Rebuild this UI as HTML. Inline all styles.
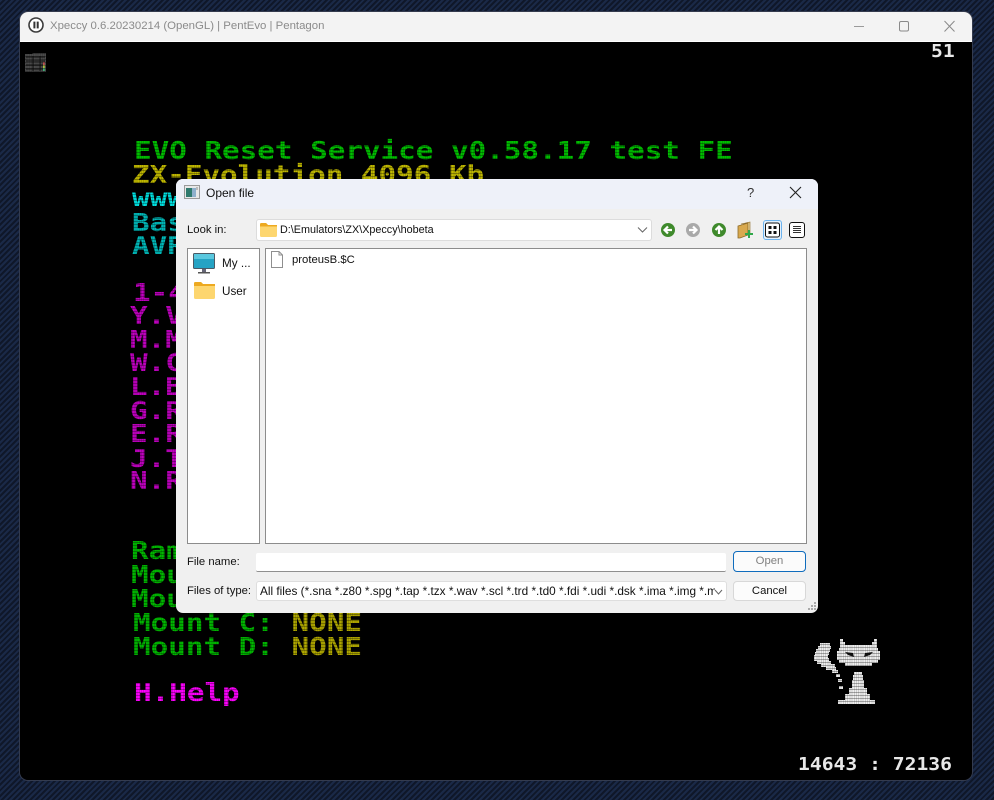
<!DOCTYPE html>
<html><head><meta charset="utf-8"><style>
html,body{margin:0;padding:0;width:994px;height:800px;overflow:hidden}
body{position:relative;background:#141f37 repeating-linear-gradient(135deg,#1a2947 0 2px,#0f1729 2px 4px);font-family:"Liberation Sans",sans-serif}
.a{position:absolute;white-space:nowrap}
#win{position:absolute;left:20px;top:12px;width:952px;height:768px;background:#000;border-radius:8px;overflow:hidden;box-shadow:0 0 0 1px #343b4e}
#tb{position:absolute;left:0;top:0;width:952px;height:29px;background:#f3f3f3;border-bottom:1px solid #fff}
.z{position:absolute;font:bold 25px/30px "DejaVu Sans Mono",monospace;white-space:pre;transform:scaleX(1.17);transform-origin:0 0}
.s{position:absolute;font:bold 18px/20px "DejaVu Sans Mono",monospace;color:#e8e8e8;white-space:pre;transform:scaleX(1.093);transform-origin:0 0}
#scan{position:absolute;left:0;top:30px;width:952px;height:738px;background:repeating-linear-gradient(0deg,rgba(0,0,0,.3) 0 1px,transparent 1px 3px),repeating-linear-gradient(90deg,rgba(0,0,0,.14) 0 1px,transparent 1px 2.2px)}
#dlg{position:absolute;left:176px;top:179px;width:642px;height:434px;background:#f0f0f0;border-radius:7px;overflow:hidden;color:#111;font-size:11.3px}
.l{position:absolute;white-space:nowrap;line-height:14px}
.box{position:absolute;background:#fff;box-sizing:border-box}
</style></head><body>
<div id="win">
<div id="tb">
<svg class="a" style="left:7px;top:4px" width="18" height="18" viewBox="0 0 18 18"><circle cx="9" cy="9" r="7" fill="#fff" stroke="#3b3b3b" stroke-width="1.6"/><rect x="6.4" y="5.6" width="2" height="6.8" fill="#333"/><rect x="9.7" y="5.6" width="2" height="6.8" fill="#333"/></svg>
<div class="a" style="left:30px;top:7px;font-size:11.4px;line-height:15px;color:#8b8b8b">Xpeccy 0.6.20230214 (OpenGL) | PentEvo | Pentagon</div>
<svg class="a" style="left:834px;top:4px" width="118" height="22" viewBox="0 0 118 22"><path d="M0 10.5H10" stroke="#9a9a9a" stroke-width="1" fill="none"/><rect x="45.5" y="5.5" width="9" height="9.5" rx="1.5" stroke="#8a8a8a" fill="none"/><path d="M90.5 5L100.5 15.5M100.5 5L90.5 15.500" stroke="#8a8a8a" fill="none"/></svg>
</div>
<svg class="a" style="left:5px;top:40px" width="22" height="20" viewBox="0 0 22 20"><path d="M0 2h7l1-1h13v19H0z" fill="#4a4a4a"/><path d="M1 5H20M1 9H20M1 13H20M1 17H20M8 4V19M15 4V19" stroke="#111" stroke-width="1"/><rect x="18" y="10" width="2" height="3" fill="#b55"/><rect x="18" y="13" width="2" height="3" fill="#ab4"/><rect x="18" y="16" width="2" height="3" fill="#4a7"/></svg>

<div class="z" style="left:114px;top:124px;color:#00c000">EVO Reset Service v0.58.17 test FE</div>
<div class="z" style="left:112px;top:148px;color:#c0b800">ZX-Evolution 4096 Kb</div>
<div class="z" style="left:112px;top:171px;color:#00e4e4">www.nedopc.com</div>
<div class="z" style="left:112px;top:196px;color:#00b8b8">Base conf</div>
<div class="z" style="left:112px;top:219px;color:#00b8b8">AVR ver</div>
<div class="z" style="left:113px;top:266px;color:#c000c0">1-4 list</div>
<div class="z" style="left:110px;top:289px;color:#c000c0">Y.V</div>
<div class="z" style="left:110px;top:313px;color:#c000c0">M.M</div>
<div class="z" style="left:110px;top:336px;color:#c000c0">W.C</div>
<div class="z" style="left:110px;top:360px;color:#c000c0">L.B</div>
<div class="z" style="left:110px;top:384px;color:#c000c0">G.R</div>
<div class="z" style="left:110px;top:407px;color:#c000c0">E.R</div>
<div class="z" style="left:110px;top:432px;color:#c000c0">J.T</div>
<div class="z" style="left:110px;top:454px;color:#c000c0">N.R</div>
<div class="z" style="left:111px;top:524px;color:#00b800">RamDisk</div>
<div class="z" style="left:111px;top:548px;color:#00b800">Mount A:</div>
<div class="z" style="left:111px;top:572px;color:#00b800">Mount B:</div>
<div class="z" style="left:113px;top:596px;color:#00b800">Mount C: <span style="color:#b0a800">NONE</span></div>
<div class="z" style="left:113px;top:620px;color:#00b800">Mount D: <span style="color:#b0a800">NONE</span></div>
<div class="z" style="left:114px;top:666px;color:#ff00ff">H.Help</div>

<svg class="a" style="left:770px;top:618px" width="110" height="85" viewBox="0 0 110 85" fill="#eeeeee" shape-rendering="crispEdges">
<rect x="30" y="13" width="10" height="3"/><rect x="28" y="16" width="13" height="3"/><rect x="26" y="19" width="14" height="3"/><rect x="25" y="22" width="14" height="3"/><rect x="24" y="25" width="14" height="3"/><rect x="24" y="28" width="15" height="3"/><rect x="27" y="31" width="14" height="3"/><rect x="31" y="34" width="14" height="3"/><rect x="36" y="37" width="10" height="3"/><rect x="42" y="40" width="6" height="3"/><rect x="46" y="44" width="4" height="3"/><rect x="48" y="49" width="4" height="3"/><rect x="49" y="56" width="4" height="3"/>
<rect x="50" y="9" width="3" height="3"/><rect x="50" y="12" width="5" height="3"/><rect x="84" y="9" width="3" height="3"/><rect x="82" y="12" width="5" height="3"/>
<rect x="50" y="15" width="7" height="3"/><rect x="80" y="15" width="7" height="3"/><rect x="50" y="15" width="37" height="3"/><rect x="49" y="18" width="39" height="3"/><rect x="47" y="21" width="43" height="9"/><rect x="49" y="30" width="39" height="3"/><rect x="55" y="33" width="27" height="3"/>
<rect x="64" y="42" width="8" height="3"/><rect x="63" y="45" width="10" height="5"/><rect x="62" y="50" width="12" height="8"/><rect x="59" y="58" width="18" height="6"/><rect x="55" y="64" width="25" height="6"/><rect x="48" y="70" width="37" height="4"/>
<path d="M55 22L63 23L64 27L58 25ZM83 22L75 23L74 27L80 25Z" fill="#111" shape-rendering="auto"/></svg>

<div id="scan"></div>
<div class="s" style="left:911px;top:30px">51</div>
<div class="s" style="left:778px;top:743px">14643 : 72136</div>
</div>

<div id="dlg">
<div class="a" style="left:0;top:0;width:642px;height:30px;background:#eef1f9"></div>
<svg class="a" style="left:8px;top:6px" width="17" height="16" viewBox="0 0 17 16"><rect x=".5" y=".5" width="15" height="13" fill="#e8e8e8" stroke="#9a9a9a"/><rect x="2" y="3" width="6" height="9" fill="#2f7a6e"/><rect x="8" y="3" width="4" height="9" fill="#8fb0cc"/><rect x="12" y="2" width="2" height="3" fill="#bbb"/></svg>
<div class="l" style="left:30px;top:7px;font-size:12px">Open file</div>
<div class="l" style="left:571px;top:7px;font-size:13px;color:#333">?</div>
<svg class="a" style="left:613px;top:7px" width="13" height="13" viewBox="0 0 13 13"><path d="M1 1L12 12M12 1L1 12" stroke="#222" stroke-width="1.1" fill="none"/></svg>

<div class="l" style="left:11px;top:44px">Look in:</div>
<div class="box" style="left:80px;top:40px;width:396px;height:22px;border:1px solid #dcdcdc;border-radius:3px"></div>
<svg class="a" style="left:84px;top:44px" width="17" height="14" viewBox="0 0 17 14"><path d="M0 1.5Q0 0 1.500 0H6L8 2H15.500Q17 2 17 3.500V12.500Q17 14 15.500 14H1.500Q0 14 0 12.500Z" fill="#fdd66f"/><path d="M0 1.500Q0 0 1.500 0H6L8 2H17V3.500H0Z" fill="#eda920"/></svg>
<div class="l" style="left:104px;top:44px;font-size:10.8px">D:\Emulators\ZX\Xpeccy\hobeta</div>
<svg class="a" style="left:461px;top:47px" width="11" height="8" viewBox="0 0 11 8"><path d="M1 1.500L5.500 6L10 1.500" stroke="#666" fill="none"/></svg>

<svg class="a" style="left:482px;top:41px" width="100" height="20" viewBox="0 0 100 20">
<circle cx="10" cy="10" r="7" fill="#3f8a2c"/><path d="M14 10H7M10 6.500L6.500 10L10 13.500" stroke="#fff" stroke-width="2.200" fill="none"/>
<circle cx="35" cy="10" r="7" fill="#a9a9a9"/><path d="M31 10H38M35 6.500L38.500 10L35 13.500" stroke="#fff" stroke-width="2.200" fill="none"/>
<circle cx="61" cy="10" r="7" fill="#3f8a2c"/><path d="M61 14V7M57.500 10L61 6.500L64.500 10" stroke="#fff" stroke-width="2.200" fill="none"/>
<path d="M80 6L90 3V15L82 18H80Z" fill="#d9a94e" stroke="#8c6a28" stroke-width=".8"/><path d="M83 4L92 2V14L90 15V3Z" fill="#ecd08f" stroke="#8c6a28" stroke-width=".6"/>
<path d="M90 10h2v3h3v2h-3v3h-2v-3h-3v-2h3z" fill="#2fa84a"/></svg>
<div class="box" style="left:587px;top:41px;width:19px;height:20px;background:#e3f0fb;border:1px solid #6db3ee;border-radius:3px"></div>
<svg class="a" style="left:587px;top:41px" width="19" height="20" viewBox="0 0 19 20"><rect x="2.500" y="3" width="14" height="14" rx="2" fill="#fff" stroke="#111"/><rect x="5.500" y="6" width="3" height="3" fill="#111"/><rect x="10.500" y="6" width="3" height="3" fill="#111"/><rect x="5.500" y="11" width="3" height="3" fill="#111"/><rect x="10.500" y="11" width="3" height="3" fill="#111"/></svg>
<svg class="a" style="left:612px;top:41px" width="19" height="20" viewBox="0 0 19 20"><rect x="1.500" y="2.500" width="15" height="15" rx="2.500" fill="#fff" stroke="#111"/><path d="M5 6.500H13M5 8.500H13M5 10.500H13M5 12.500H13" stroke="#333" fill="none"/></svg>

<div class="box" style="left:11px;top:69px;width:73px;height:296px;border:1px solid #8c8c8c"></div>
<svg class="a" style="left:17px;top:74px" width="23" height="21" viewBox="0 0 23 21"><rect x=".5" y=".5" width="21" height="15" rx="1" fill="#25a3c4" stroke="#4a5a66"/><rect x="1" y="1" width="20" height="5" fill="#5ac8df"/><rect x="9" y="16" width="4" height="3" fill="#667"/><rect x="5" y="19" width="12" height="1.500" fill="#555"/></svg>
<div class="l" style="left:46px;top:78px;font-size:11.7px">My ...</div>
<svg class="a" style="left:18px;top:103px" width="21" height="17" viewBox="0 0 21 17"><path d="M0 1.500Q0 0 1.500 0H7L9 2H19.500Q21 2 21 3.500V15.500Q21 17 19.500 17H1.500Q0 17 0 15.500Z" fill="#fdd66f"/><path d="M0 1.500Q0 0 1.500 0H7L9 2H21V4H0Z" fill="#eda920"/></svg>
<div class="l" style="left:46px;top:106px;font-size:11.7px">User</div>

<div class="box" style="left:89px;top:69px;width:542px;height:296px;border:1px solid #8c8c8c"></div>
<svg class="a" style="left:94px;top:72px" width="14" height="17" viewBox="0 0 14 17"><path d="M1.500 .5H9L12.500 4V16.500H1.500Z" fill="#fff" stroke="#8f8f8f"/><path d="M9 .5V4H12.500" fill="none" stroke="#8f8f8f"/></svg>
<div class="l" style="left:116px;top:74px;font-size:11.3px">proteusB.$C</div>

<div class="l" style="left:11px;top:376px">File name:</div>
<div class="box" style="left:80px;top:374px;width:470px;height:19px;border-bottom:1px solid #8f8f8f;border-radius:2px"></div>
<div class="box" style="left:557px;top:372px;width:73px;height:21px;border:1px solid #0f6cbd;border-radius:4px;background:#fbfbfb;text-align:center;line-height:19px;color:#808080">Open</div>

<div class="l" style="left:11px;top:405px">Files of type:</div>
<div class="box" style="left:80px;top:402px;width:471px;height:20px;border:1px solid #dedede;border-radius:3px;overflow:hidden"><div class="l" style="left:3px;top:2px;width:455px;overflow:hidden;font-size:11.8px">All files (*.sna *.z80 *.spg *.tap *.tzx *.wav *.scl *.trd *.td0 *.fdi *.udi *.dsk *.ima *.img *.mgt *.trd</div></div>
<svg class="a" style="left:538px;top:410px" width="9" height="6" viewBox="0 0 9 6"><path d="M1 1L4.500 5L8 1" stroke="#666" fill="none"/></svg>
<div class="box" style="left:557px;top:402px;width:73px;height:20px;border:1px solid #d8d8d8;border-radius:4px;background:#fcfcfc;text-align:center;line-height:18px">Cancel</div>
<svg class="a" style="left:630px;top:422px" width="11" height="11" viewBox="0 0 11 11" fill="#aaa"><rect x="8" y="1" width="2" height="2"/><rect x="5" y="4" width="2" height="2"/><rect x="8" y="4" width="2" height="2"/><rect x="2" y="7" width="2" height="2"/><rect x="5" y="7" width="2" height="2"/><rect x="8" y="7" width="2" height="2"/></svg>
</div>
</body></html>
